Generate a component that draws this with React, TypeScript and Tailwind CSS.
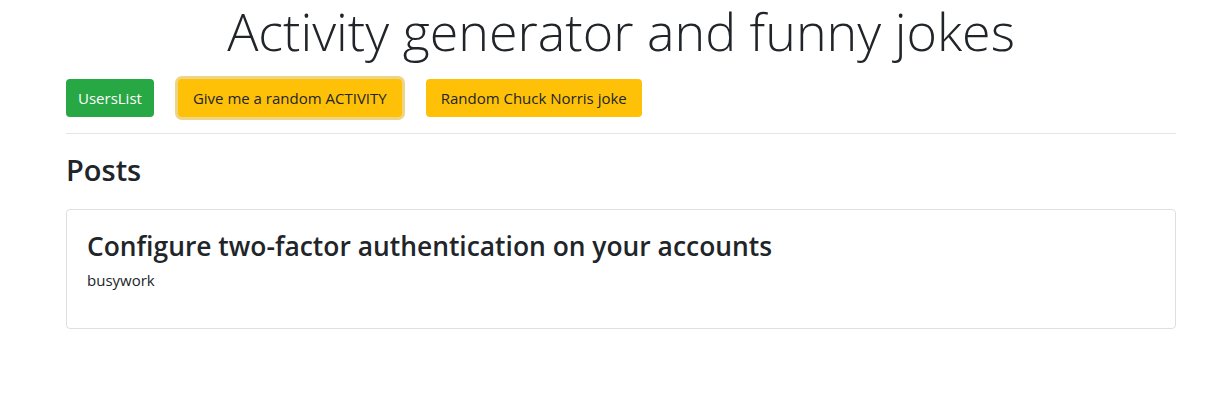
import React from 'react';

const App = () => {
  return (
    <div className="min-h-screen bg-white text-[#212529]" style={{ fontFamily: '"Open Sans", "Liberation Sans", sans-serif' }}>
      <div className="ml-[66px] w-[1110px]">
        <h1 className="text-center text-[52px] font-light leading-[62px]">
          Activity generator and funny jokes
        </h1>

        <div className="mt-[17px] flex gap-6">
          <button className="h-[38px] px-3 rounded bg-[#28a745] text-white text-[15px]">UsersList</button>
          <button className="h-[38px] px-[15px] rounded bg-[#ffc107] text-[#212529] text-[15px] shadow-[0_0_0_3px_rgba(222,170,12,0.5)]">
            Give me a random ACTIVITY
          </button>
          <button className="h-[38px] px-[15px] rounded bg-[#ffc107] text-[#212529] text-[15px]">
            Random Chuck Norris joke
          </button>
        </div>

        <hr className="mt-4 border-t border-black/10" />

        <h2 className="mt-[18px] text-[29px] font-semibold leading-[36px]">Posts</h2>

        <div className="mt-[21px] h-[120px] rounded border border-black/[0.125] px-5 pt-[18px]">
          <h3 className="text-[26.4px] font-semibold leading-[36px]">
            Configure two-factor authentication on your accounts
          </h3>
          <p className="mt-[4px] text-[15px] leading-6">busywork</p>
        </div>
      </div>
    </div>
  );
};

export default App;
